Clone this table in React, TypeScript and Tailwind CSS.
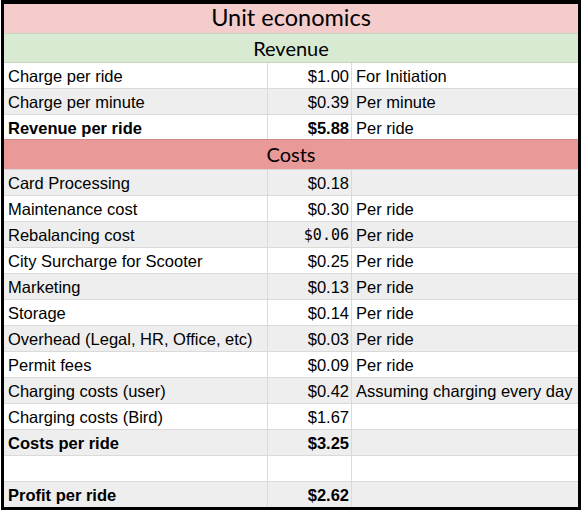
import React from "react";

type Row = { label: string; value: string; note?: string; bold?: boolean; mono?: boolean; gray?: boolean };

const revenueRows: Row[] = [
  { label: "Charge per ride", value: "$1.00", note: "For Initiation" },
  { label: "Charge per minute", value: "$0.39", note: "Per minute", gray: true },
];

const costRows: Row[] = [
  { label: "Card Processing", value: "$0.18", gray: true },
  { label: "Maintenance cost", value: "$0.30", note: "Per ride" },
  { label: "Rebalancing cost", value: "$0.06", note: "Per ride", mono: true, gray: true },
  { label: "City Surcharge for Scooter", value: "$0.25", note: "Per ride" },
  { label: "Marketing", value: "$0.13", note: "Per ride", gray: true },
  { label: "Storage", value: "$0.14", note: "Per ride" },
  { label: "Overhead (Legal, HR, Office, etc)", value: "$0.03", note: "Per ride", gray: true },
  { label: "Permit fees", value: "$0.09", note: "Per ride" },
  { label: "Charging costs (user)", value: "$0.42", note: "Assuming charging every day", gray: true },
  { label: "Charging costs (Bird)", value: "$1.67" },
  { label: "Costs per ride", value: "$3.25", bold: true, gray: true },
  { label: "", value: "" },
];

function DataRow({ r, variant }: { r: Row; variant?: "last" | "pink" }) {
  const bg = r.gray ? "bg-[#eeeeee]" : "bg-white";
  const weight = r.bold ? "font-bold" : "font-normal";
  const bb =
    variant === "last"
      ? "h-[25px]"
      : variant === "pink"
      ? "h-[25px] border-b border-[#d48a8a]"
      : "h-[26px] border-b border-[#dadada]";
  return (
    <div className={`flex ${bg} ${bb} text-[16.5px] text-black leading-none`}>
      <div className={`w-[264px] shrink-0 border-r border-[#dadada] flex items-center pt-[2px] pl-[4px] whitespace-nowrap overflow-hidden ${weight}`}>
        {r.label}
      </div>
      <div
        className={`w-[84px] shrink-0 border-r border-[#dadada] flex items-center justify-end pt-[2px] pr-[2px] whitespace-nowrap ${weight} ${
          r.mono ? "text-[15px] font-['DejaVu_Sans_Mono','Liberation_Mono',monospace]" : ""
        }`}
      >
        {r.value}
      </div>
      <div className="flex-1 flex items-center pt-[2px] pl-[4px] whitespace-nowrap overflow-hidden font-normal">{r.note}</div>
    </div>
  );
}

export default function App() {
  return (
    <div className="w-[581px] h-[511px] bg-white font-['Liberation_Sans',Arial,sans-serif]">
      <div className="ml-[1px] w-[580px] border-[3px] border-t-[4px] border-black flex flex-col">
        <div className="h-[30px] bg-[#f4cccc] border-b border-[#c6d6bf] flex items-center justify-center pb-[2px] text-[23.5px] text-black leading-none font-['Lato','Open_Sans',sans-serif]">
          Unit economics
        </div>
        <div className="h-[29px] bg-[#d9ead3] border-b border-[#c6d6bf] flex items-center justify-center pb-[1px] text-[20px] text-black leading-none font-['Lato','Open_Sans',sans-serif]">
          Revenue
        </div>
        {revenueRows.map((r, i) => (
          <DataRow key={i} r={r} />
        ))}
        <DataRow r={{ label: "Revenue per ride", value: "$5.88", note: "Per ride", bold: true }} variant="pink" />
        <div className="h-[30px] bg-[#ea9999] border-b border-[#dadada] flex items-center justify-center pb-[1px] text-[20px] text-black leading-none font-['Lato','Open_Sans',sans-serif]">
          Costs
        </div>
        {costRows.map((r, i) => (
          <DataRow key={i} r={r} />
        ))}
        <DataRow r={{ label: "Profit per ride", value: "$2.62", bold: true, gray: true }} variant="last" />
      </div>
    </div>
  );
}
